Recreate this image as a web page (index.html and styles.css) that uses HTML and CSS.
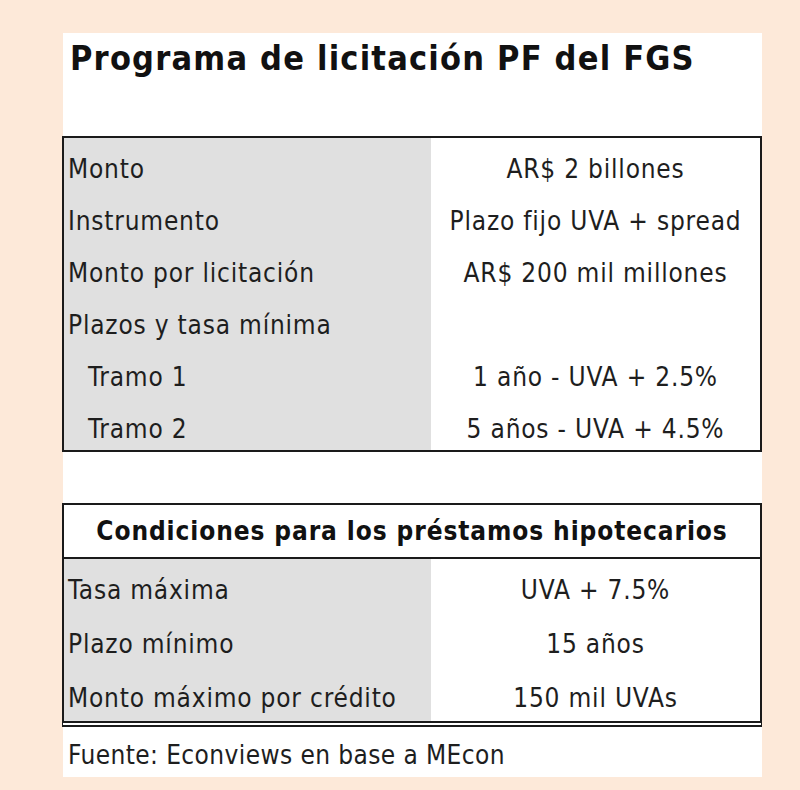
FILE: index.html
```html
<!DOCTYPE html>
<html lang="es">
<head>
<meta charset="utf-8">
<link rel="stylesheet" href="styles.css">
</head>
<body>
<div class="panel">
  <div class="title">Programa de licitación PF del FGS</div>
  <div class="table t1">
    <div class="row"><div class="lab">Monto</div><div class="val">AR$ 2 billones</div></div>
    <div class="row"><div class="lab">Instrumento</div><div class="val">Plazo fijo UVA + spread</div></div>
    <div class="row"><div class="lab">Monto por licitación</div><div class="val">AR$ 200 mil millones</div></div>
    <div class="row"><div class="lab">Plazos y tasa mínima</div><div class="val"></div></div>
    <div class="row"><div class="lab ind">Tramo 1</div><div class="val">1 año - UVA + 2.5%</div></div>
    <div class="row"><div class="lab ind">Tramo 2</div><div class="val">5 años - UVA + 4.5%</div></div>
  </div>
  <div class="spacer"></div>
  <div class="table t2">
    <div class="head">Condiciones para los préstamos hipotecarios</div>
    <div class="row r2"><div class="lab">Tasa máxima</div><div class="val">UVA + 7.5%</div></div>
    <div class="row r2"><div class="lab">Plazo mínimo</div><div class="val">15 años</div></div>
    <div class="row r2"><div class="lab">Monto máximo por crédito</div><div class="val">150 mil UVAs</div></div>
  </div>
  <div class="foot">Fuente: Econviews en base a MEcon</div>
</div>
</body>
</html>
```
FILE: styles.css
```css
html, body {
  margin: 0;
  padding: 0;
  background: #fde9d9;
}
body {
  font-family: "DejaVu Sans Condensed", "DejaVu Sans", sans-serif;
  color: #1e1e1e;
  height: 790px;
  overflow: hidden;
}
.panel {
  margin: 33px 0 0 63px;
  width: 699px;
  height: 744px;
  background: #ffffff;
  display: flex;
  flex-direction: column;
}
.title {
  height: 103px;
  flex: none;
  box-sizing: border-box;
  padding: 5px 0 0 7px;
  font-size: 34px;
  font-weight: bold;
  letter-spacing: 1.2px;
  color: #111;
}
.table {
  flex: none;
  margin-left: -1px;
  border: 2px solid #1a1a1a;
  box-sizing: border-box;
}
.t2 {
  border-bottom: 6px double #1a1a1a;
}
.row {
  display: flex;
  height: 52px;
  font-size: 26px;
  letter-spacing: 0.8px;
}
.r2 {
  height: 54px;
}
.lab {
  width: 367px;
  background: #e0e0e0;
  padding: 16px 0 0 4px;
  box-sizing: border-box;
  white-space: nowrap;
}
.r2 .lab, .r2 .val {
  padding-top: 16px;
}
.ind {
  padding-left: 24px;
}
.val {
  flex: 1;
  text-align: center;
  padding-top: 16px;
  box-sizing: border-box;
  white-space: nowrap;
}
.spacer {
  flex: none;
  height: 51px;
}
.head {
  height: 54px;
  border-bottom: 2px solid #1a1a1a;
  box-sizing: border-box;
  display: flex;
  align-items: center;
  justify-content: center;
  font-size: 26px;
  font-weight: bold;
  letter-spacing: 0.9px;
  color: #111;
}
.foot {
  padding: 13px 0 0 5px;
  font-size: 26px;
  letter-spacing: 0.4px;
}
```
